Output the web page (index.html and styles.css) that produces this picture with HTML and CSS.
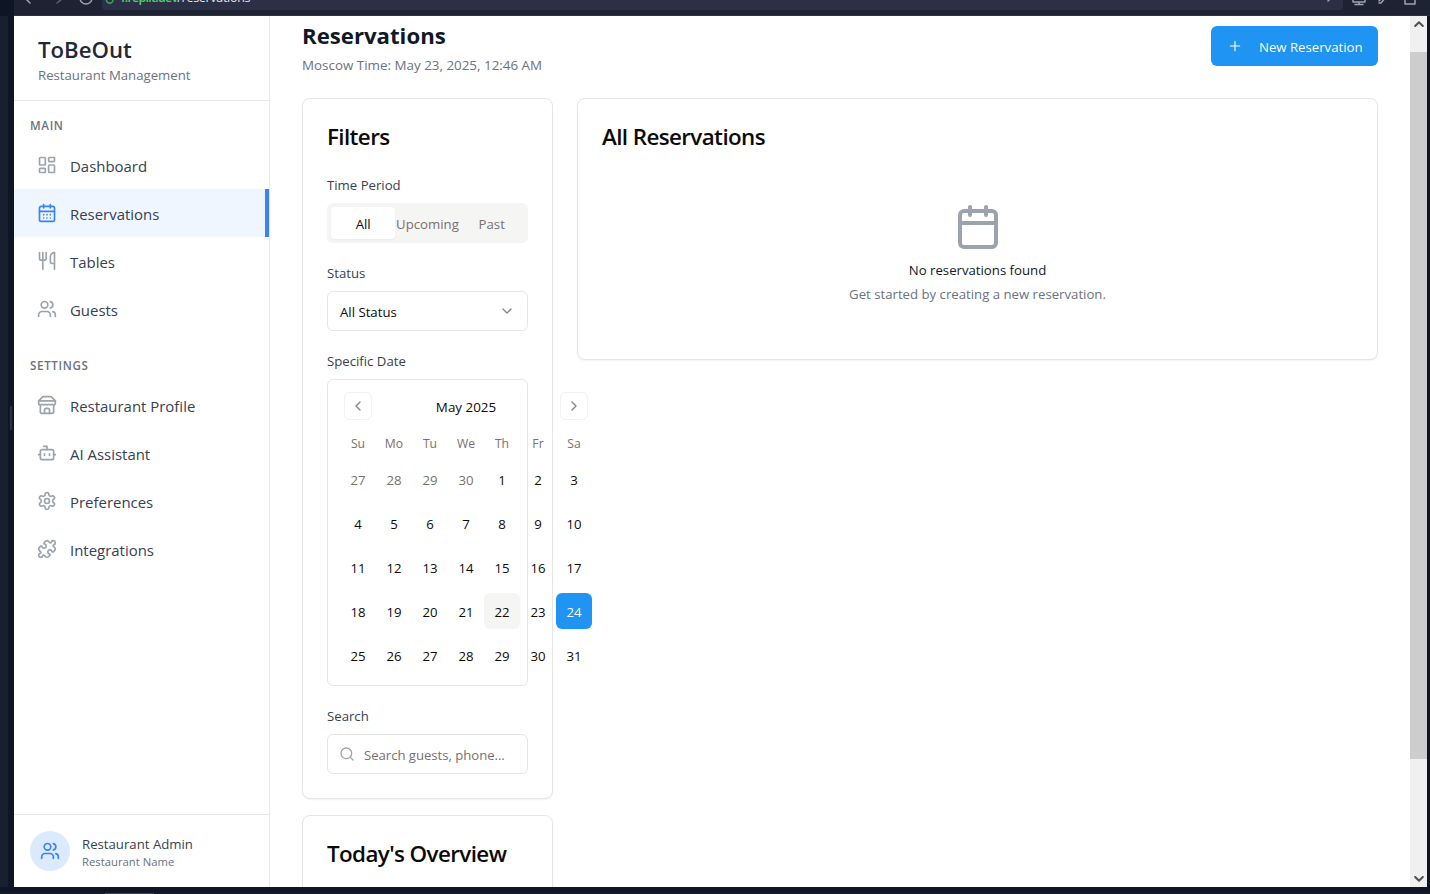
FILE: index.html
```html
<!DOCTYPE html>
<html lang="en">
<head>
<meta charset="utf-8">
<title>Reservations</title>
<link rel="stylesheet" href="styles.css">
</head>
<body>
<svg class="sprite" aria-hidden="true">
  <symbol id="users" viewBox="0 0 24 24"><path d="M16 21v-2a4 4 0 0 0-4-4H6a4 4 0 0 0-4 4v2"/><circle cx="9" cy="7" r="4"/><path d="M22 21v-2a4 4 0 0 0-3-3.87M16 3.13a4 4 0 0 1 0 7.75"/></symbol>
  <symbol id="dashboard" viewBox="0 0 24 24"><rect x="3" y="3" width="7" height="9" rx="1"/><rect x="14" y="3" width="7" height="5" rx="1"/><rect x="14" y="12" width="7" height="9" rx="1"/><rect x="3" y="16" width="7" height="5" rx="1"/></symbol>
  <symbol id="calendar" viewBox="0 0 24 24"><path d="M8 2v4M16 2v4"/><rect x="3" y="4" width="18" height="18" rx="2"/><path d="M3 10h18"/></symbol>
  <symbol id="calendar-days" viewBox="0 0 24 24"><path d="M8 2v4M16 2v4"/><rect x="3" y="4" width="18" height="18" rx="2"/><path d="M3 10h18M8 14h.01M12 14h.01M16 14h.01M8 18h.01M12 18h.01M16 18h.01"/></symbol>
  <symbol id="utensils" viewBox="0 0 24 24"><path d="M3 2v7c0 1.1.9 2 2 2h4a2 2 0 0 0 2-2V2M7 2v20M21 15V2a5 5 0 0 0-5 5v6c0 1.1.9 2 2 2h3Zm0 0v7"/></symbol>
  <symbol id="store" viewBox="0 0 24 24"><path d="m2 7 4.41-4.41A2 2 0 0 1 7.83 2h8.34a2 2 0 0 1 1.42.59L22 7"/><path d="M4 12v8a2 2 0 0 0 2 2h12a2 2 0 0 0 2-2v-8"/><path d="M15 22v-4a2 2 0 0 0-2-2h-2a2 2 0 0 0-2 2v4M2 7h20"/><path d="M22 7v3a2 2 0 0 1-2 2a2.7 2.7 0 0 1-1.59-.63.7.7 0 0 0-.82 0A2.7 2.7 0 0 1 16 12a2.7 2.7 0 0 1-1.59-.63.7.7 0 0 0-.82 0A2.7 2.7 0 0 1 12 12a2.7 2.7 0 0 1-1.59-.63.7.7 0 0 0-.82 0A2.7 2.7 0 0 1 8 12a2.7 2.7 0 0 1-1.59-.63.7.7 0 0 0-.82 0A2.7 2.7 0 0 1 4 12a2 2 0 0 1-2-2V7"/></symbol>
  <symbol id="bot" viewBox="0 0 24 24"><path d="M12 8V4H8"/><rect x="4" y="8" width="16" height="12" rx="2"/><path d="M2 14h2M20 14h2M15 13v2M9 13v2"/></symbol>
  <symbol id="settings" viewBox="0 0 24 24"><path d="M12.22 2h-.44a2 2 0 0 0-2 2v.18a2 2 0 0 1-1 1.73l-.43.25a2 2 0 0 1-2 0l-.15-.08a2 2 0 0 0-2.73.73l-.22.38a2 2 0 0 0 .73 2.73l.15.1a2 2 0 0 1 1 1.72v.51a2 2 0 0 1-1 1.74l-.15.09a2 2 0 0 0-.73 2.73l.22.38a2 2 0 0 0 2.73.73l.15-.08a2 2 0 0 1 2 0l.43.25a2 2 0 0 1 1 1.73V20a2 2 0 0 0 2 2h.44a2 2 0 0 0 2-2v-.18a2 2 0 0 1 1-1.73l.43-.25a2 2 0 0 1 2 0l.15.08a2 2 0 0 0 2.73-.73l.22-.39a2 2 0 0 0-.73-2.73l-.15-.08a2 2 0 0 1-1-1.74v-.5a2 2 0 0 1 1-1.74l.15-.09a2 2 0 0 0 .73-2.73l-.22-.38a2 2 0 0 0-2.73-.73l-.15.08a2 2 0 0 1-2 0l-.43-.25a2 2 0 0 1-1-1.73V4a2 2 0 0 0-2-2z"/><circle cx="12" cy="12" r="3"/></symbol>
  <symbol id="puzzle" viewBox="0 0 24 24"><path d="M15.39 4.39a1 1 0 0 0 1.68-.474 2.5 2.5 0 1 1 3.014 3.015 1 1 0 0 0-.474 1.68l1.683 1.682a2.414 2.414 0 0 1 0 3.414L19.61 15.39a1 1 0 0 1-1.68-.474 2.5 2.5 0 1 0-3.014 3.015 1 1 0 0 1 .474 1.68l-1.683 1.682a2.414 2.414 0 0 1-3.414 0L8.61 19.61a1 1 0 0 0-1.68.474 2.5 2.5 0 1 1-3.014-3.015 1 1 0 0 0 .474-1.68l-1.683-1.682a2.414 2.414 0 0 1 0-3.414L4.39 8.61a1 1 0 0 1 1.68.474 2.5 2.5 0 1 0 3.014-3.015 1 1 0 0 1-.474-1.68l1.683-1.682a2.414 2.414 0 0 1 3.414 0z"/></symbol>
  <symbol id="plus" viewBox="0 0 24 24"><path d="M5 12h14M12 5v14"/></symbol>
  <symbol id="down" viewBox="0 0 24 24"><path d="m6 9 6 6 6-6"/></symbol>
  <symbol id="left" viewBox="0 0 24 24"><path d="m15 18-6-6 6-6"/></symbol>
  <symbol id="right" viewBox="0 0 24 24"><path d="m9 18 6-6-6-6"/></symbol>
  <symbol id="search" viewBox="0 0 24 24"><circle cx="11" cy="11" r="8"/><path d="m21 21-4.3-4.3"/></symbol>
</svg>
<div class="window">
  <div class="toolbar">
    <svg class="tools-left" viewBox="0 0 88 16"><path d="M16-4l-4 3 4 4"/><path class="dim" d="M43-4l5 3-5 4"/><path d="M66-2a6 6 0 0 0 12 0"/></svg>
    <div class="address"><svg class="lock" viewBox="0 0 12 16"><path d="M4-2a3.300 3.300 0 1 0 6 2"/></svg><span class="url"><b>f.replit.dev</b>/reservations</span><svg class="go" viewBox="0 0 10 16"><path d="M3 1l3-3"/></svg></div>
    <svg class="tools-right" viewBox="0 0 87 16"><path d="M10-3v5h12v-5M16 2v2M12 4.500h8M36 1l5-5M36 3h2l5-6M62-4v8h10v-8"/></svg>
  </div>
  <div class="gutter"><span class="grip"></span></div>
  <div class="page">
    <aside class="sidebar">
      <div class="brand"><div class="brand-name">ToBeOut</div><div class="brand-sub">Restaurant Management</div></div>
      <nav class="nav">
        <div class="nav-head">MAIN</div>
        <a class="item"><svg><use href="#dashboard"/></svg><span>Dashboard</span></a>
        <a class="item active"><svg><use href="#calendar-days"/></svg><span>Reservations</span></a>
        <a class="item"><svg><use href="#utensils"/></svg><span>Tables</span></a>
        <a class="item"><svg><use href="#users"/></svg><span>Guests</span></a>
        <div class="nav-head second">SETTINGS</div>
        <a class="item"><svg><use href="#store"/></svg><span>Restaurant Profile</span></a>
        <a class="item"><svg><use href="#bot"/></svg><span>AI Assistant</span></a>
        <a class="item"><svg><use href="#settings"/></svg><span>Preferences</span></a>
        <a class="item"><svg><use href="#puzzle"/></svg><span>Integrations</span></a>
      </nav>
      <div class="account">
        <div class="avatar"><svg><use href="#users"/></svg></div>
        <div class="acc-text"><div class="acc-name">Restaurant Admin</div><div class="acc-sub">Restaurant Name</div></div>
      </div>
    </aside>
    <main class="main">
      <header class="head">
        <div class="head-text"><h1>Reservations</h1><p class="time">Moscow Time: May 23, 2025, 12:46 AM</p></div>
        <button class="new"><svg><use href="#plus"/></svg><span>New Reservation</span></button>
      </header>
      <div class="columns">
        <div class="left">
          <section class="card filters">
            <h2>Filters</h2>
            <div class="field">
              <label>Time Period</label>
              <div class="tabs"><span class="tab on">All</span><span class="tab">Upcoming</span><span class="tab">Past</span></div>
            </div>
            <div class="field">
              <label>Status</label>
              <div class="box select"><span>All Status</span><svg><use href="#down"/></svg></div>
            </div>
            <div class="field">
              <label>Specific Date</label>
              <div class="calendar">
                <div class="month"><span class="step"><svg><use href="#left"/></svg></span><span class="month-name">May 2025</span><span class="step"><svg><use href="#right"/></svg></span></div>
                <div class="week days"><span>Su</span><span>Mo</span><span>Tu</span><span>We</span><span>Th</span><span>Fr</span><span>Sa</span></div>
                <div class="week"><span class="out">27</span><span class="out">28</span><span class="out">29</span><span class="out">30</span><span>1</span><span>2</span><span>3</span></div>
                <div class="week"><span>4</span><span>5</span><span>6</span><span>7</span><span>8</span><span>9</span><span>10</span></div>
                <div class="week"><span>11</span><span>12</span><span>13</span><span>14</span><span>15</span><span>16</span><span>17</span></div>
                <div class="week"><span>18</span><span>19</span><span>20</span><span>21</span><span class="today">22</span><span>23</span><span class="picked">24</span></div>
                <div class="week"><span>25</span><span>26</span><span>27</span><span>28</span><span>29</span><span>30</span><span>31</span></div>
              </div>
            </div>
            <div class="field">
              <label>Search</label>
              <div class="box search"><svg><use href="#search"/></svg><span>Search guests, phone...</span></div>
            </div>
          </section>
          <section class="card overview"><h2>Today's Overview</h2></section>
        </div>
        <section class="card list">
          <h2>All Reservations</h2>
          <div class="empty"><svg><use href="#calendar"/></svg><h3>No reservations found</h3><p>Get started by creating a new reservation.</p></div>
        </section>
      </div>
    </main>
    <div class="scrollbar"><svg viewBox="0 0 10 6"><path d="M1.200 5 5 1.200 8.800 5"/></svg><div class="track"><div class="thumb"></div></div><svg viewBox="0 0 10 6"><path d="M1.200 1 5 4.800 8.800 1"/></svg></div>
  </div>
  <div class="edge"></div>
  <div class="bottom"><span></span></div>
</div>
</body>
</html>
```
FILE: styles.css
```css
* { box-sizing: border-box; margin: 0; padding: 0; }
body { width: 1430px; height: 894px; overflow: hidden; background: #0e1525; font: 13.2px/20px "Open Sans", "Noto Sans", sans-serif; color: #0c0a09; }
.sprite { position: absolute; width: 0; height: 0; }
svg { display: block; flex: none; fill: none; stroke: currentColor; stroke-width: 2; stroke-linecap: round; stroke-linejoin: round; }
.window { display: grid; grid-template: 16px 871px 7px / 14px 1413px 3px; width: 1430px; height: 894px; }

.toolbar { grid-column: 1 / -1; display: flex; margin-left: 14px; background: #1e2333; border-bottom: 1px solid #2b3245; color: #9da2b0; }
.toolbar svg { height: 16px; stroke-width: 1.5; }
.tools-left { width: 88px; }
.dim { opacity: .5; }
.address { display: flex; width: 1241px; height: 10px; background: #2b3047; border-radius: 0 0 4px 4px; overflow: hidden; }
.lock { width: 12px; color: #3fa55c; margin-left: 1px; }
.url { flex: 1; margin: -11px 0 0 6px; font-size: 12.500px; letter-spacing: -.3px; line-height: 18px; color: #e4e6ec; white-space: nowrap; }
.url b { font-weight: 600; letter-spacing: -.75px; color: #4fd06c; }
.go { width: 10px; margin-right: 8px; }
.tools-right { width: 87px; }

.gutter { display: flex; align-items: center; justify-content: flex-end; padding: 0 2px 67px 0; background: linear-gradient(90deg, #181f2e 8px, #0e1525 8px); }
.grip { width: 2px; height: 24px; background: #2b3245; }
.page { display: flex; background: #fff; overflow: hidden; }
.bottom { grid-column: 1 / -1; display: flex; align-items: flex-end; background: linear-gradient(#0e1525 5px, #151a24 5px); }
.bottom span { width: 49px; height: 1px; margin-left: 105px; background: #3b4050; }

.sidebar { display: flex; flex-direction: column; width: 256px; border-right: 1px solid #e5e7eb; }
.brand { height: 85px; padding: 18px 24px 0; border-bottom: 1px solid #e5e7eb; }
.brand-name { font-size: 22.200px; line-height: 31px; font-weight: 600; color: #1f2937; }
.brand-sub { color: #6b7280; }
.nav { flex: 1; }
.nav-head { height: 40px; padding: 16px 16px 0; font-size: 11.600px; line-height: 18px; font-weight: 600; letter-spacing: .65px; color: #6b7280; }
.nav-head.second { margin-top: 8px; }
.item { display: flex; align-items: center; gap: 13px; height: 48px; padding: 2px 23px 0; font-size: 14.950px; color: #374151; }
.item svg { width: 20px; height: 20px; color: #9ca3af; margin-top: -3px; }
.item.active { background: #eff6ff; border-right: 4px solid #3b82f6; }
.item.active svg { color: #3b82f6; }
.account { display: flex; align-items: center; gap: 12px; height: 73px; padding: 0 16px; border-top: 1px solid #e5e7eb; }
.avatar { display: grid; place-items: center; width: 40px; height: 40px; border-radius: 50%; background: #dbeafe; color: #3b82f6; }
.avatar svg { width: 20px; height: 20px; }
.acc-text { padding-top: 2px; }
.acc-name { color: #374151; }
.acc-sub { font-size: 11.300px; line-height: 16px; color: #6b7280; }

.main { width: 1140px; padding: 2px 32px 0; }
.head { display: flex; align-items: center; justify-content: space-between; height: 56px; margin-bottom: 24px; }
.head-text { padding-top: 3px; }
h1 { font-size: 22.200px; line-height: 32px; margin-bottom: 3px; color: #111827; }
.time { font-size: 13.400px; color: #6b7280; }
.new { display: flex; align-items: center; gap: 16px; width: 167px; height: 40px; padding: 0 16px; border: 0; border-radius: 6px; background: #2094f3; color: #f8fafc; font: inherit; white-space: nowrap; }
.new svg { width: 16px; height: 16px; stroke-width: 1.800; }
.new span, .tab, .select span, .search span { padding-top: 2px; }
.columns { display: grid; grid-template-columns: 251px 801px; gap: 24px; align-items: start; }
.card { background: #fff; border: 1px solid #e7e5e4; border-radius: 8px; padding: 24px; box-shadow: 0 1px 2px rgba(0, 0, 0, .05); }
h2 { font-size: 22.400px; line-height: 28px; font-weight: 600; letter-spacing: -.6px; white-space: nowrap; }
.filters { height: 701px; margin-bottom: 16px; }
.overview { height: 200px; }
.field { margin-top: 20px; }
.filters h2 + .field { margin-top: 24px; }
.field label { display: block; margin-bottom: 8px; color: #374151; }
.tabs { display: grid; grid-template-columns: repeat(3, 64.300px); height: 40px; padding: 4px; border-radius: 6px; background: #f5f5f4; color: #78716c; }
.tab { display: flex; align-items: center; justify-content: center; border-radius: 4px; }
.tab.on { background: #fff; color: #0c0a09; box-shadow: 0 1px 2px rgba(0, 0, 0, .05); }
.box { display: flex; align-items: center; height: 40px; padding: 0 12px; border: 1px solid #e7e5e4; border-radius: 6px; white-space: nowrap; }
.select { justify-content: space-between; }
.select svg { width: 16px; height: 16px; color: #858483; }
.search { gap: 9px; padding-left: 11px; color: #78716c; letter-spacing: -.05px; }
.search svg { width: 16px; height: 16px; color: #9ca3af; }
.calendar { height: 307px; padding: 12px; border: 1px solid #e7e5e4; border-radius: 6px; }
.month { display: flex; align-items: center; justify-content: space-between; width: 244px; height: 28px; margin-left: 4px; }
.month-name { padding-top: 2px; font-size: 13.400px; }
.step { display: grid; place-items: center; width: 28px; height: 28px; border: 1px solid #f3f2f1; border-radius: 6px; color: #858483; }
.step svg { width: 16px; height: 16px; }
.week { display: grid; grid-template-columns: repeat(7, 36px); grid-auto-rows: 36px; width: 252px; height: 36px; margin-top: 8px; line-height: 38px; text-align: center; }
.week.days { grid-auto-rows: 20px; height: 20px; margin-top: 14px; font-size: 12.200px; line-height: 20px; color: #78716c; }
.days + .week { margin-top: 7px; }
.out { color: #78716c; }
.today { background: #f5f5f4; border-radius: 6px; }
.picked { background: #2094f3; color: #f8fafc; border-radius: 6px; }
.list { height: 262px; }
.empty { display: flex; flex-direction: column; align-items: center; padding-top: 52px; }
.empty svg { width: 48px; height: 48px; color: #9ca3af; }
.empty h3 { margin-top: 9px; font-size: inherit; font-weight: 400; color: #111827; }
.empty p { margin-top: 4px; color: #6b7280; }

.scrollbar { display: flex; flex-direction: column; align-items: center; width: 17px; padding: 5px 0; background: #f0f0f0; color: #505050; }
.scrollbar svg { width: 10px; height: 6px; }
.track { flex: 1; width: 17px; padding-top: 25px; }
.thumb { height: 707px; background: #cdcdcd; }
.edge { background: #0e1525; }
```
